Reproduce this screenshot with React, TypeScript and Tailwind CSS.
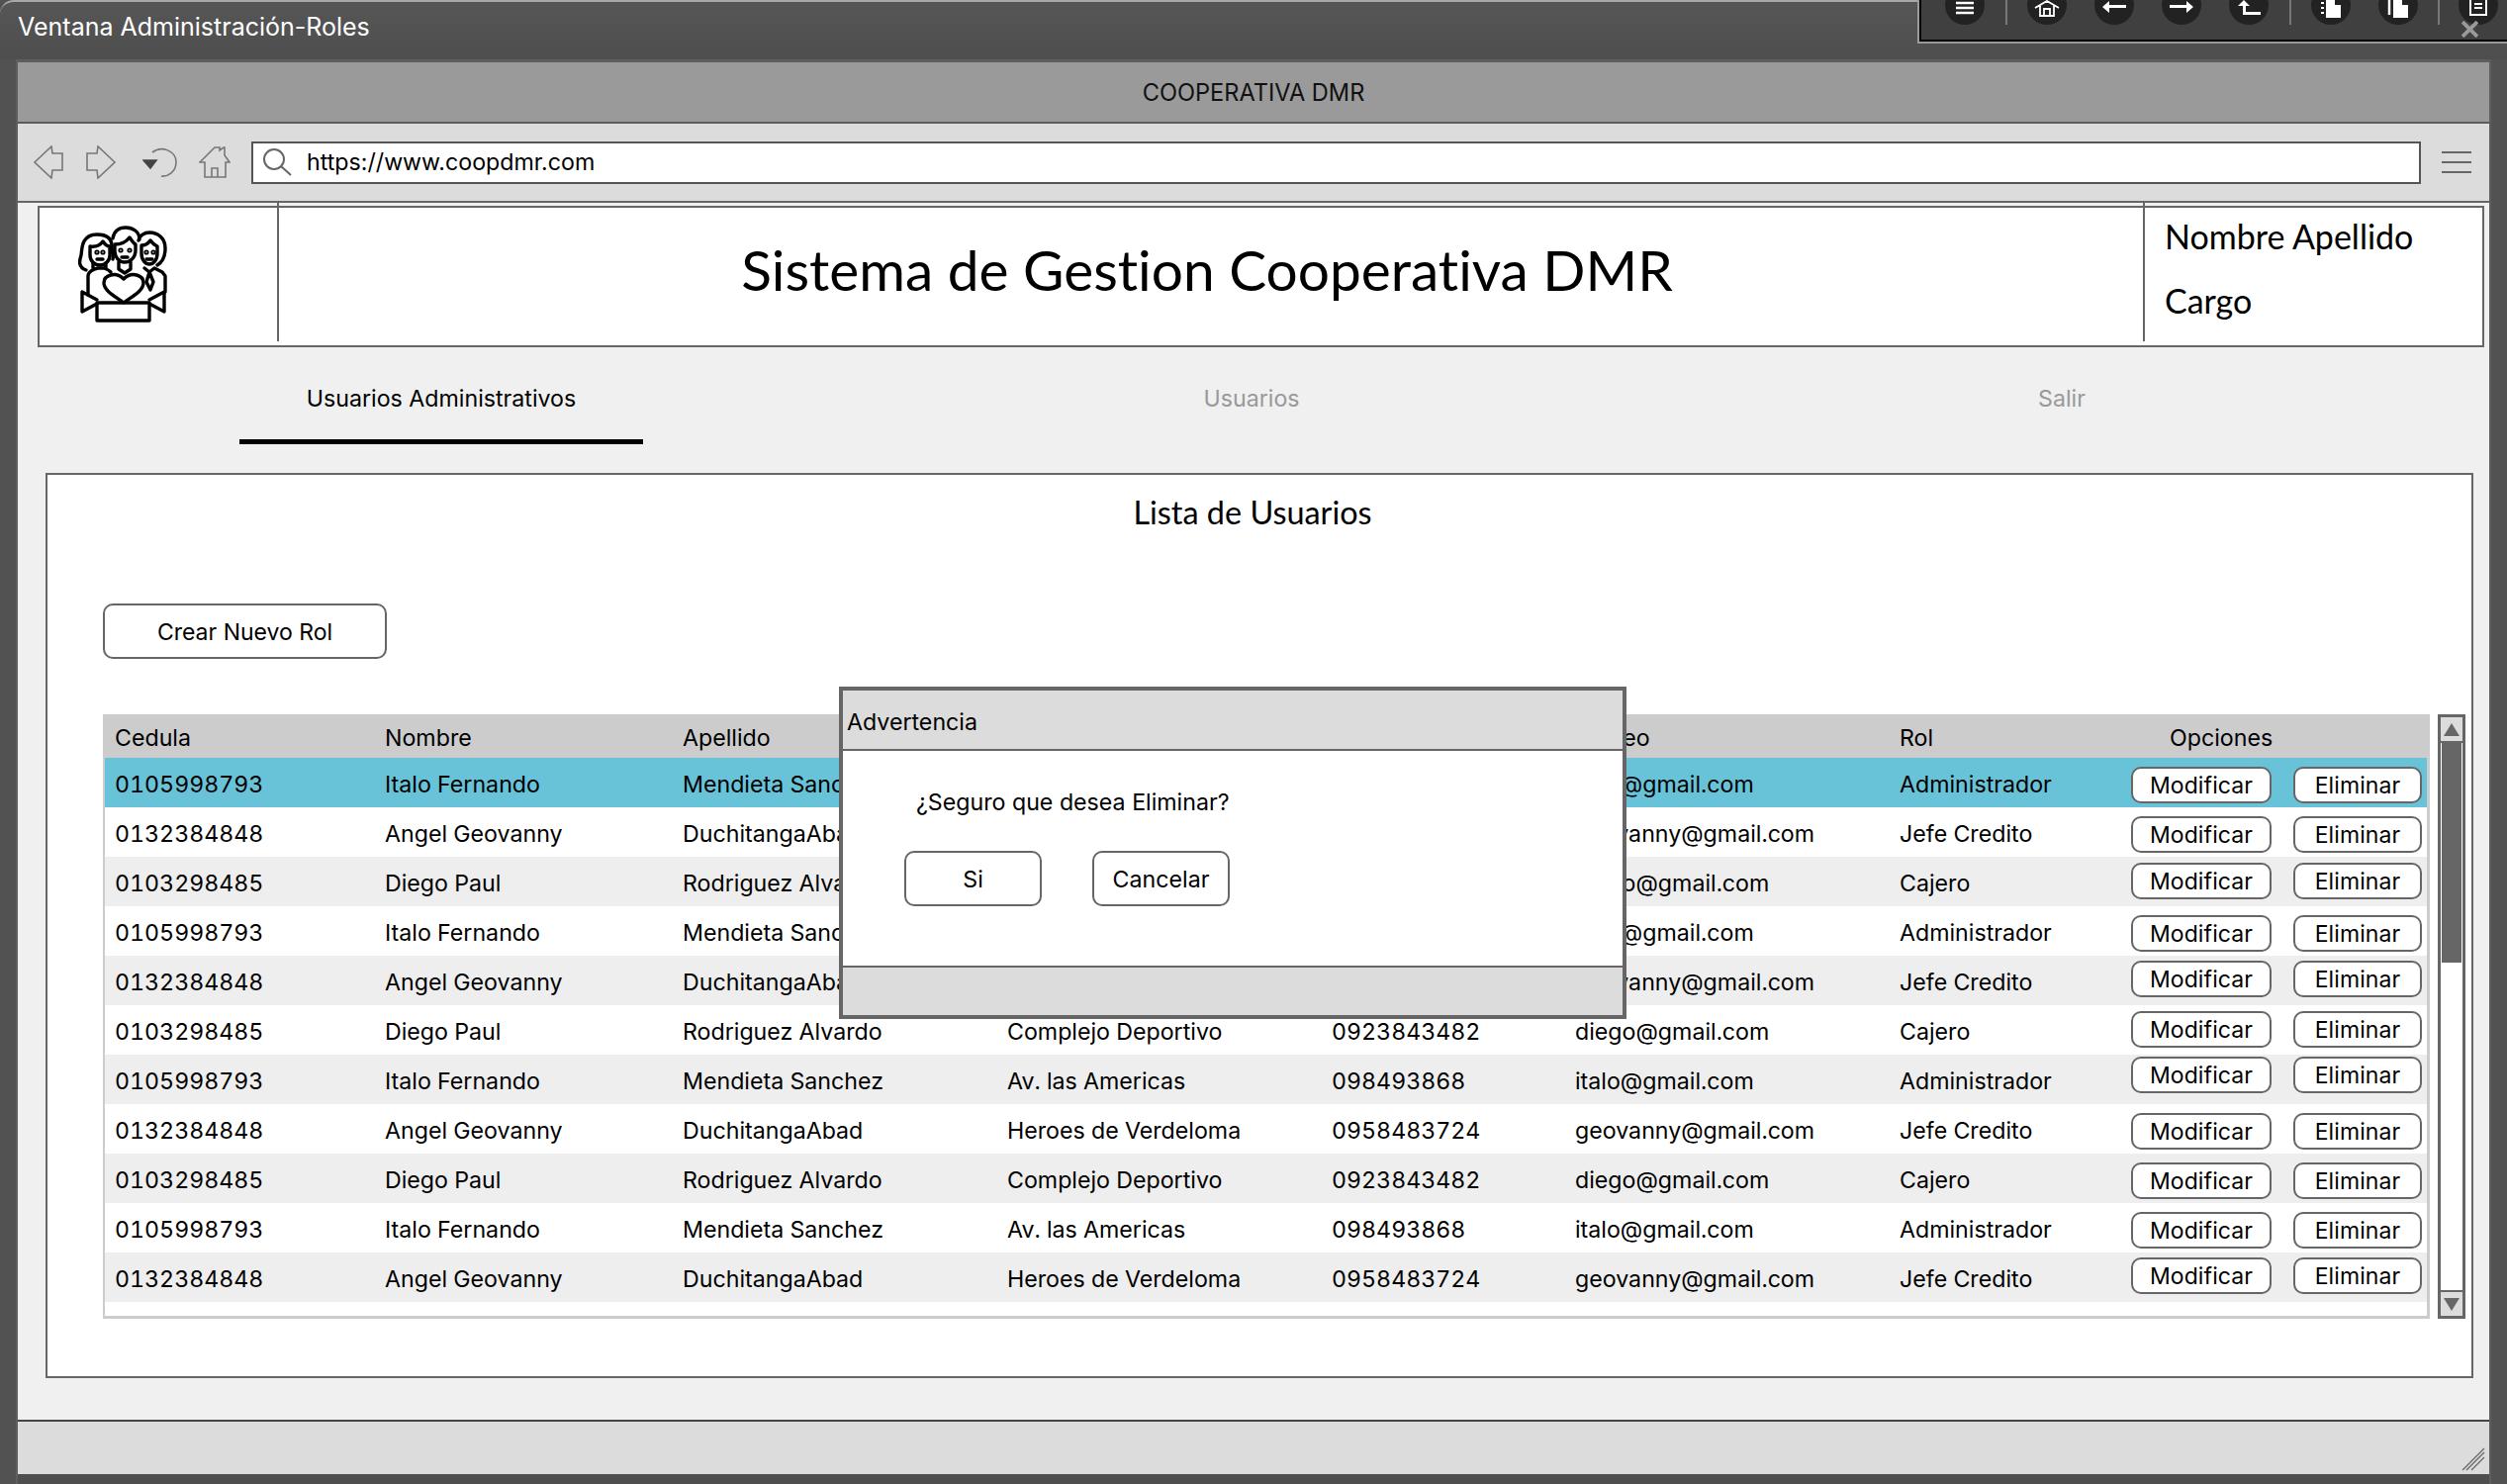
const people = [
  ["0105998793", "Italo Fernando", "Mendieta Sanchez", "Av. las Americas", "098493868", "italo@gmail.com", "Administrador"],
  ["0132384848", "Angel Geovanny", "DuchitangaAbad", "Heroes de Verdeloma", "0958483724", "geovanny@gmail.com", "Jefe Credito"],
  ["0103298485", "Diego Paul", "Rodriguez Alvardo", "Complejo Deportivo", "0923843482", "diego@gmail.com", "Cajero"],
];

// the mockup's buttons are not quite aligned from row to row
const buttonOffsets = ["mt-[9px]", "mt-[9px]", "mt-[6px]", "mt-[9px]", "mt-[5px]", "mt-[6px]", "mt-[2px]", "mt-[9px]", "mt-[9px]", "mt-[9px]", "mt-[5px]"];

const columns = "grid grid-cols-[283px_301px_328px_328px_246px_328px_234px_1fr]";

function rowColor(i: number) {
  if (i === 0) return "bg-[#68c3d9]";
  return i % 2 === 0 ? "bg-[#eeeeee]" : "bg-white";
}

function TableRow({ index }: { index: number }) {
  const cells = people[index % 3];
  return (
    <div className={`${columns} h-[50px] ${rowColor(index)}`}>
      {cells.map((c, i) => (
        <div key={i} className={`pt-[5px] flex items-center whitespace-nowrap tabular-nums ${i === 0 ? "pl-[10px]" : ""}`}>
          {/* the first five rows' address and phone sit behind the dialog */}
          {index < 5 && (i === 3 || i === 4) ? "" : c}
        </div>
      ))}
      <div className={`flex items-start gap-[22px] ${buttonOffsets[index]}`}>
        <button className="w-[142px] h-[37px] pt-[2px] bg-white border-2 border-[#666] rounded-[10px] text-[23px] leading-none tracking-[0.1px]">Modificar</button>
        <button className="w-[130px] h-[37px] pt-[2px] bg-white border-2 border-[#666] rounded-[10px] text-[23px] leading-none tracking-[0.1px]">Eliminar</button>
      </div>
    </div>
  );
}

function Logo() {
  return (
    <svg viewBox="0 0 130 130" className="w-[130px] h-[130px] -mt-[8px]" fill="none" stroke="#000" strokeWidth="3.4" strokeLinejoin="round" strokeLinecap="round">
      <path d="M38 95h53v18H38z" />
      <path d="M38 92 23 84v20l15-8M91 92l15-8v20l-15-8" />
      <path d="M65 95C57 89 45 83 45 75c0-8 12-12 20-4 8-8 20-4 20 4 0 8-12 14-20 20z" />
      <path d="M29 87V68c0-4 5-7 10-8h6c3 1 5 2 7 4M34 60v-5M47 60v-5" />
      <path d="M27 62c-8-3-7-9-5-15 1-6 0-21 16-21 11 0 15 5 15 12 0 6 2 10 1 13" />
      <path d="M31 38c6 1 10-1 13-5 2 3 5 5 7 5v9c0 6-5 10-10 10s-10-4-10-10z" />
      <path d="M54 30c1-7 6-11 13-11s14 4 14 12" />
      <path d="M56 36c6 0 12-3 15-7 2 3 4 6 6 7v6c0 7-5 12-11 12s-10-5-10-12z" />
      <path d="M60 54v7l6 4 6-4v-7" />
      <path d="M80 32c1-5 6-8 11-8 9 0 16 6 16 16 0 8-3 14-8 17" />
      <path d="M83 37c4 0 7-2 9-5 2 3 5 5 7 6v7c0 7-4 11-8 11s-8-4-8-11z" />
      <path d="M86 60l5 4 5-4 8 4 3 4v16M91 64l-3 10 4 8 3-8z" />
      <circle cx="38" cy="44" r="0.9" /><circle cx="44" cy="44" r="0.9" /><circle cx="62" cy="42" r="0.9" /><circle cx="71" cy="42" r="0.9" /><circle cx="88" cy="44" r="0.9" /><circle cx="95" cy="44" r="0.9" />
      <path d="M38 51h6M63 49h6M88 51h6" />
    </svg>
  );
}

function NavIcons() {
  return (
    <div className="flex items-center pl-[16px] w-[236px] shrink-0">
      <svg viewBox="0 0 31 34" className="w-[31px] h-[34px]" fill="none" stroke="#777" strokeWidth="1.6">
        <path d="M1 17 18 1l1 7h10v17H19l-1 8z" />
      </svg>
      <svg viewBox="0 0 31 34" className="w-[31px] h-[34px] ml-[21px]" fill="none" stroke="#777" strokeWidth="1.6">
        <path d="M30 17 13 1l-1 7H2v17h10l1 8z" />
      </svg>
      <svg viewBox="0 0 36 34" className="w-[36px] h-[34px] ml-[27px]" fill="none" stroke="#777" strokeWidth="1.6">
        <path d="M10 7c9-7 24-2 24 10 0 10-9 15-15 14" />
        <path d="M1 15h13l-6 8z" fill="#444" stroke="#444" />
      </svg>
      <svg viewBox="0 0 32 34" className="w-[32px] h-[34px] ml-[21px]" fill="none" stroke="#777" strokeWidth="1.6">
        <path d="M1 17 16 2h5v3l4-3h1v8l5 7h-4v15H6V17zM13 32V23h6v9" />
      </svg>
    </div>
  );
}

// the circles are cut by the top of the screen, so their glyphs sit in the visible part
function ToolCircle({ children }: { children: React.ReactNode }) {
  return <div className="w-[40px] h-[40px] rounded-full bg-[#222] flex justify-center pt-[15px] shrink-0">{children}</div>;
}

// tool strip that hangs over the top right corner of the window
function FloatingTools() {
  return (
    <div className="absolute top-0 left-[1940px] w-[594px] h-[42px] bg-[#404040] border-b-2 border-l-2 border-black outline-2 outline-[#9a9a9a] overflow-hidden">
      <div className="flex items-start -mt-[15px] pl-[24px]">
        <ToolCircle>
          <svg viewBox="0 0 18 16" className="w-[18px] h-[16px]" stroke="#fff" strokeWidth="2.5"><path d="M0 3h18M0 8h18M0 13h18" /></svg>
        </ToolCircle>
        <div className="w-[2px] h-[40px] bg-[#777] ml-[21px]" />
        <div className="ml-[20px]">
          <ToolCircle>
            <svg viewBox="0 0 26 17" className="w-[26px] h-[17px]" fill="none" stroke="#fff" strokeWidth="1.8"><path d="M1 8 13 1l12 7M6 6v10h14V6M10 9h6v7h-6z" /></svg>
          </ToolCircle>
        </div>
        <div className="ml-[28px]">
          <ToolCircle>
            <svg viewBox="0 0 24 14" className="w-[24px] h-[14px]" fill="#fff"><path d="M0 7 7 1v4h17v3H7v5z" /></svg>
          </ToolCircle>
        </div>
        <div className="ml-[28px]">
          <ToolCircle>
            <svg viewBox="0 0 24 14" className="w-[24px] h-[14px]" fill="#fff"><path d="M24 7 17 1v4H0v3h17v5z" /></svg>
          </ToolCircle>
        </div>
        <div className="ml-[28px]">
          <ToolCircle>
            <svg viewBox="0 0 24 16" className="w-[24px] h-[16px]" fill="#fff"><path d="M1 6 7 0l6 6H9v6h15v3H6V6z" /></svg>
          </ToolCircle>
        </div>
        <div className="w-[2px] h-[40px] bg-[#777] ml-[21px]" />
        <div className="ml-[20px]">
          <ToolCircle>
            <svg viewBox="0 0 24 18" className="w-[24px] h-[18px]"><path d="M7 0h9v5h6v13H7z" fill="#fff" /><path d="M2 3h3M2 8h3M2 13h3" stroke="#fff" strokeWidth="2" /></svg>
          </ToolCircle>
        </div>
        <div className="ml-[28px]">
          <ToolCircle>
            <svg viewBox="0 0 24 18" className="w-[24px] h-[18px]"><path d="M7 0h9v5h6v13H7z" fill="#fff" /><path d="M3 0v15" stroke="#fff" strokeWidth="2.5" /></svg>
          </ToolCircle>
        </div>
        <div className="w-[2px] h-[40px] bg-[#777] ml-[20px]" />
        <div className="ml-[19px]">
          <ToolCircle>
            <svg viewBox="0 0 18 16" className="w-[18px] h-[16px]" fill="none" stroke="#fff" strokeWidth="2"><path d="M1 0v15h16V0M5 4h8M5 8h8" /></svg>
          </ToolCircle>
        </div>
      </div>
      <svg viewBox="0 0 16 16" className="absolute left-[546px] top-[21px] w-[17px] h-[17px]" stroke="#9a9a9a" strokeWidth="3.5">
        <path d="M1 1l14 14M15 1 1 15" />
      </svg>
    </div>
  );
}

function Dialog() {
  return (
    <div className="absolute left-[848px] top-[694px] w-[796px] h-[336px] border-4 border-[#666] bg-white flex flex-col">
      <div className="h-[61px] bg-[#dcdcdc] border-b-2 border-[#666] flex items-center pl-[4px] pt-[5px] text-[23.2px]">Advertencia</div>
      <div className="flex-1 pl-[62px]">
        <p className="mt-[36px] text-[23.2px] leading-[32px] pl-[12px]">¿Seguro que desea Eliminar?</p>
        <div className="flex gap-[51px] mt-[33px]">
          <button className="w-[139px] h-[56px] pt-[2px] border-2 border-[#666] rounded-[10px] text-[23.2px] bg-white">Si</button>
          <button className="w-[139px] h-[56px] pt-[2px] border-2 border-[#666] rounded-[10px] text-[23.2px] bg-white">Cancelar</button>
        </div>
      </div>
      <div className="h-[50px] bg-[#dcdcdc] border-t-2 border-[#666]" />
    </div>
  );
}

export default function App() {
  return (
    <div className="relative w-[2534px] h-[1500px] overflow-hidden bg-[#525252] font-['Inter',sans-serif] text-[23.2px] text-black flex flex-col">
      <div className="h-[60px] shrink-0 border-t-2 border-[#a8a8a8] rounded-tl-[14px] flex items-center pl-[18px] pb-[6px] text-[25px] text-white bg-gradient-to-b from-[#565656] to-[#4e4e4e]">
        Ventana Administración-Roles
      </div>

      <div className="flex-1 flex flex-col ml-[16px] w-[2502px] border-l-2 border-r-2 border-t-[3px] border-[#5e5e5e] bg-[#f0f0f0]">
        <div className="h-[62px] shrink-0 bg-[#9a9a9a] border-b-2 border-[#5c5c5c] flex items-center justify-center pt-[2px] text-[23.6px] text-[#111]">
          COOPERATIVA DMR
        </div>

        <div className="h-[80px] shrink-0 bg-[#dcdcdc] border-b-2 border-[#666] flex items-center">
          <NavIcons />
          <div className="w-[2193px] h-[43px] border-2 border-[#555] bg-white flex items-center">
            <svg viewBox="0 0 32 32" className="w-[32px] h-[32px] ml-[8px]" fill="none" stroke="#666" strokeWidth="2">
              <circle cx="13" cy="13" r="10" />
              <path d="M20 20l10 9" />
            </svg>
            <span className="ml-[14px]">https://www.coopdmr.com</span>
          </div>
          <div className="ml-[21px] w-[30px] flex flex-col gap-[8px]">
            <div className="h-[2px] bg-[#666]" />
            <div className="h-[2px] bg-[#666]" />
            <div className="h-[2px] bg-[#666]" />
          </div>
        </div>

        <div className="ml-[20px] mt-[3px] w-[2473px] h-[143px] shrink-0 border-2 border-[#666] bg-white flex items-start">
          <div className="w-[240px] h-[139px] flex items-center pl-[20px]">
            <Logo />
          </div>
          <div className="w-[2px] h-[140px] -mt-[5px] bg-[#666]" />
          <div className="w-[1884px] h-[139px] flex items-center justify-center pr-[8px] pb-[13px] font-['Lato',sans-serif] text-[56.8px] [font-variant-ligatures:none]">
            Sistema de Gestion Cooperativa DMR
          </div>
          <div className="w-[2px] h-[140px] -mt-[5px] bg-[#666]" />
          <div className="pl-[20px] pt-[9px] font-['Lato',sans-serif] text-[34px] leading-[40px]">
            <div>Nombre Apellido</div>
            <div className="mt-[25px]">Cargo</div>
          </div>
        </div>

        <div className="h-[127px] shrink-0 flex gap-[411px] pl-[224px] text-[#999]">
          <div className="w-[408px] h-[98px] pt-[11px] border-b-[5px] border-black flex items-center justify-center text-black">Usuarios Administrativos</div>
          <div className="w-[408px] h-[98px] pt-[6px] flex items-center justify-center">Usuarios</div>
          <div className="w-[408px] h-[98px] pt-[6px] flex items-center justify-center">Salir</div>
        </div>

        <div className="ml-[28px] w-[2454px] h-[915px] shrink-0 border-2 border-[#666] bg-white pl-[56px]">
          <h1 className="h-[78px] pt-[18px] pr-[14px] text-center font-['Lato',sans-serif] text-[32.4px] leading-[40px] -ml-[56px]">Lista de Usuarios</h1>
          <button className="mt-[52px] w-[287px] h-[56px] pt-[2px] border-2 border-[#666] rounded-[10px] bg-white text-[23px] block">Crear Nuevo Rol</button>
          <div className="mt-[56px] flex gap-[8px]">
            <div className="w-[2352px] h-[611px] border-l-2 border-r-[3px] border-b-[3px] border-[#cccccc] bg-white">
              <div className={`${columns} h-[44px] bg-[#cccccc] pt-[4px] items-center`}>
                <div className="pl-[10px]">Cedula</div>
                <div>Nombre</div>
                <div>Apellido</div>
                <div>Direccion</div>
                <div>Telefono</div>
                <div>Correo</div>
                <div>Rol</div>
                <div className="pl-[39px]">Opciones</div>
              </div>
              {buttonOffsets.map((_, i) => (
                <TableRow key={i} index={i} />
              ))}
            </div>
            <div className="w-[28px] h-[611px] border-[3px] border-[#666] bg-white flex flex-col">
              <div className="h-[26px] bg-[#dcdcdc] border-b-2 border-[#666] flex items-center justify-center">
                <div className="w-0 h-0 border-l-[8px] border-r-[8px] border-b-[13px] border-l-transparent border-r-transparent border-b-[#666]" />
              </div>
              <div className="flex-1 px-[1px]">
                <div className="h-[222px] bg-[#666]" />
              </div>
              <div className="h-[26px] bg-[#dcdcdc] border-t-2 border-[#666] flex items-center justify-center">
                <div className="w-0 h-0 border-l-[8px] border-r-[8px] border-t-[13px] border-l-transparent border-r-transparent border-t-[#666]" />
              </div>
            </div>
          </div>
        </div>

        <div className="mt-auto h-[55px] shrink-0 bg-[#dcdcdc] border-t-2 border-[#444] flex justify-end items-end pr-[4px] pb-[3px]">
          <svg viewBox="0 0 24 24" className="w-[24px] h-[24px]" stroke="#666" strokeWidth="1.2">
            <path d="M1 23 23 1M10 23 23 10" />
            <path d="M5 23 23 5" />
          </svg>
        </div>
        <div className="h-[10px] shrink-0 bg-[#4e4e4e]" />
      </div>

      <FloatingTools />
      <Dialog />
    </div>
  );
}
